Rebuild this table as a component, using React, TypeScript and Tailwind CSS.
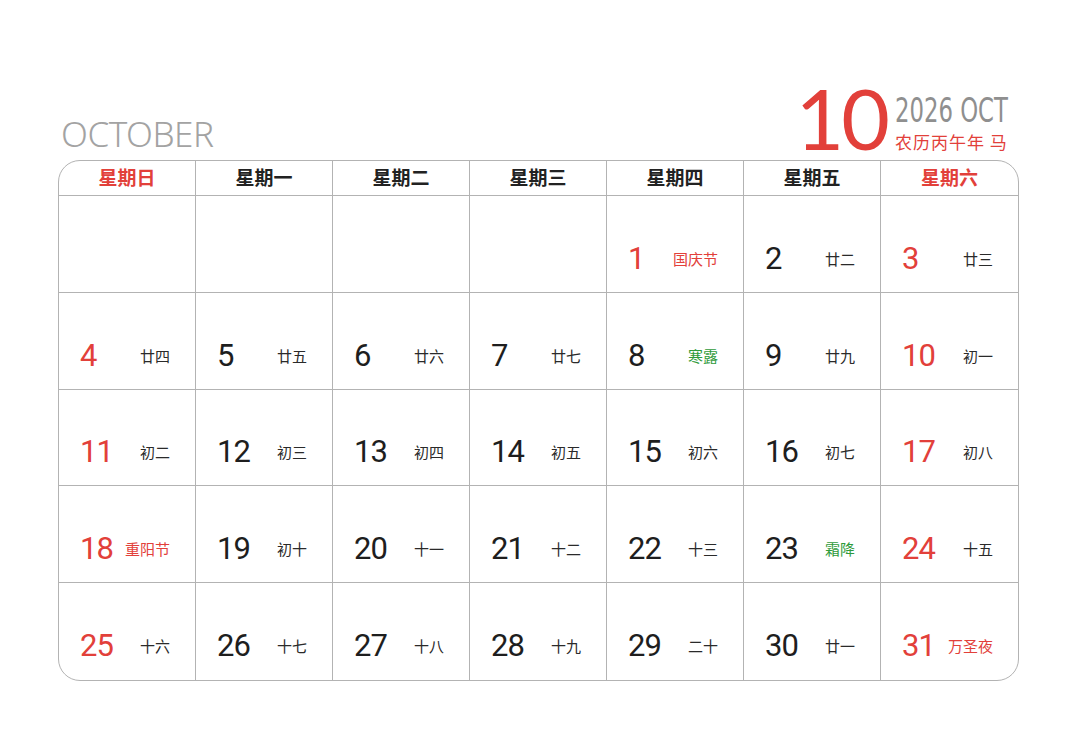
import React from 'react';

const RED = 'text-[#e2403a]';
const CJK = 'font-["Noto_Sans_CJK_SC","Noto_Sans",sans-serif]';
const NUM = 'font-["Roboto","Noto_Sans",sans-serif]';

type Day = { d: number; lunar: string; tone?: 'red' | 'green' };

const weekdays = ['星期日', '星期一', '星期二', '星期三', '星期四', '星期五', '星期六'];

const days: Day[] = [
  { d: 1, lunar: '国庆节', tone: 'red' },
  { d: 2, lunar: '廿二' },
  { d: 3, lunar: '廿三' },
  { d: 4, lunar: '廿四' },
  { d: 5, lunar: '廿五' },
  { d: 6, lunar: '廿六' },
  { d: 7, lunar: '廿七' },
  { d: 8, lunar: '寒露', tone: 'green' },
  { d: 9, lunar: '廿九' },
  { d: 10, lunar: '初一' },
  { d: 11, lunar: '初二' },
  { d: 12, lunar: '初三' },
  { d: 13, lunar: '初四' },
  { d: 14, lunar: '初五' },
  { d: 15, lunar: '初六' },
  { d: 16, lunar: '初七' },
  { d: 17, lunar: '初八' },
  { d: 18, lunar: '重阳节', tone: 'red' },
  { d: 19, lunar: '初十' },
  { d: 20, lunar: '十一' },
  { d: 21, lunar: '十二' },
  { d: 22, lunar: '十三' },
  { d: 23, lunar: '霜降', tone: 'green' },
  { d: 24, lunar: '十五' },
  { d: 25, lunar: '十六' },
  { d: 26, lunar: '十七' },
  { d: 27, lunar: '十八' },
  { d: 28, lunar: '十九' },
  { d: 29, lunar: '二十' },
  { d: 30, lunar: '廿一' },
  { d: 31, lunar: '万圣夜', tone: 'red' },
];

export default function App() {
  // October 2026 starts on Thursday
  const cells: (Day | null)[] = [null, null, null, null, ...days];

  return (
    <div className="w-[1080px] h-[730px] bg-white pt-[84px] px-[58px]">
      <div className="flex items-end justify-between h-[76px] w-[961px]">
        <div className='pl-[3px] pb-[9px] text-[35px] leading-none font-light text-[#a3a3a3] tracking-[-0.5px] font-["Noto_Sans",sans-serif]'>
          OCTOBER
        </div>
        <div className="flex items-end pr-[11px]">
          <div className={`${RED} text-[84px] leading-[64px] mb-[10px] tracking-[-3px] font-["Lato",sans-serif]`}>10</div>
          <div className="flex flex-col w-[113px] ml-[8px] mb-[7px]">
            <div className="h-[33px] whitespace-nowrap">
              <span className='inline-block origin-left scale-x-[0.69] text-[33px] leading-none text-[#8f8f8f] font-["DejaVu_Sans",sans-serif]'>
                2026 OCT
              </span>
            </div>
            <div className={`${RED} ${CJK} text-[17px] leading-[22px] mt-[4px] tracking-[1px] whitespace-nowrap`}>
              农历丙午年 马
            </div>
          </div>
        </div>
      </div>

      <div className="w-[961px] border border-[#b3b3b3] rounded-[22px] overflow-hidden grid grid-cols-7">
        {weekdays.map((w, i) => (
          <div
            key={w}
            className={`h-[35px] pb-[1px] flex items-center justify-center border-b border-[#b3b3b3] text-[19px] font-bold ${CJK} ${
              i < 6 ? 'border-r' : ''
            } ${i === 0 || i === 6 ? RED : 'text-[#222]'}`}
          >
            {w}
          </div>
        ))}
        {cells.map((c, i) => {
          const col = i % 7;
          const lastRow = i >= 28;
          const weekend = col === 0 || col === 6;
          return (
            <div
              key={i}
              className={`h-[96.75px] flex items-center justify-between pl-[21px] pr-[25px] pt-[29px] border-[#b3b3b3] ${
                col < 6 ? 'border-r' : ''
              } ${lastRow ? '' : 'border-b'}`}
            >
              {c && (
                <>
                  <span
                    className={`${NUM} text-[31px] leading-none tracking-[-1px] ${
                      weekend || c.tone === 'red' ? RED : 'text-[#1e1e1e]'
                    }`}
                  >
                    {c.d}
                  </span>
                  <span
                    className={`${CJK} text-[15px] leading-none ${
                      c.tone === 'red' ? RED : c.tone === 'green' ? 'text-[#2f9b3b]' : 'text-[#2a2a2a]'
                    }`}
                  >
                    {c.lunar}
                  </span>
                </>
              )}
            </div>
          );
        })}
      </div>
    </div>
  );
}
